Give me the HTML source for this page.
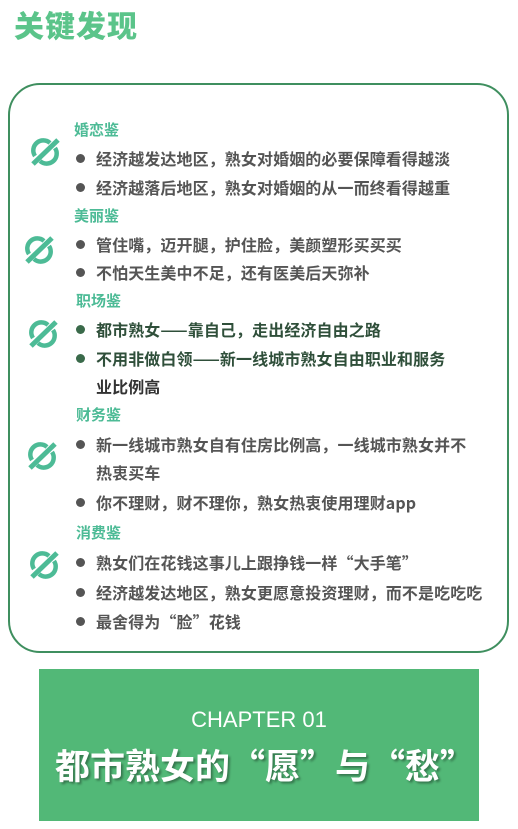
<!DOCTYPE html>
<html><head><meta charset="utf-8"><style>
*{margin:0;padding:0;box-sizing:border-box}
body{width:518px;height:829px;background:#fff;position:relative;overflow:hidden;font-family:"Noto Sans CJK SC","Liberation Sans",sans-serif}
.t{position:absolute;left:14px;top:2px;font-size:30px;font-weight:900;color:#5bc48a;letter-spacing:1px}
.box{position:absolute;left:8px;top:83px;width:501px;height:570px;border:2px solid #3f8f5f;border-radius:32px}
.h{position:absolute;left:74px;font-size:15px;font-weight:bold;color:#4dbb96;line-height:20px}
.l{position:absolute;left:96px;font-size:16px;font-weight:bold;color:#555;line-height:20px;white-space:nowrap;letter-spacing:0.1px}
.l:before{content:"";position:absolute;left:-20px;top:6px;width:9px;height:9px;border-radius:50%;background:#555}
.l.nb:before{display:none}
.g{color:#2f4f3a}.g:before{background:#3a6a4a}
.ic{position:absolute;left:28px;width:34px;height:32px}
.ch{position:absolute;left:39px;top:669px;width:440px;height:152px;background:#52b877;color:#fff;text-align:center}
</style></head><body>
<div class="t">关键发现</div>
<div class="box"></div>
<svg width="0" height="0" style="position:absolute"><defs><g id="i" fill="none" stroke="#4dbb96" stroke-width="4.5"><path d="M7 20 A10 10 0 0 1 22 7"/><path d="M27 12 A10 10 0 0 1 12 25"/><path d="M5 28 L30 4" stroke-width="5"/></g></defs></svg>
<div class="h" style="top:120px">婚恋鉴</div>
<svg class="ic" style="top:136px" viewBox="0 0 34 32"><use href="#i"/></svg>
<div class="l" style="top:148px">经济越发达地区，熟女对婚姻的必要保障看得越淡</div>
<div class="l" style="top:177px">经济越落后地区，熟女对婚姻的从一而终看得越重</div>
<div class="h" style="top:206px">美丽鉴</div>
<svg class="ic" style="top:234px;left:22px" viewBox="0 0 34 32"><use href="#i"/></svg>
<div class="l" style="top:234px">管住嘴，迈开腿，护住脸，美颜塑形买买买</div>
<div class="l" style="top:262px">不怕天生美中不足，还有医美后天弥补</div>
<div class="h" style="top:291px;left:76px">职场鉴</div>
<svg class="ic" style="top:318px;left:26px" viewBox="0 0 34 32"><use href="#i"/></svg>
<div class="l g" style="top:319px">都市熟女——靠自己，走出经济自由之路</div>
<div class="l g" style="top:348px">不用非做白领——新一线城市熟女自由职业和服务</div>
<div class="l g nb" style="top:376px;color:#333">业比例高</div>
<div class="h" style="top:405px;left:76px">财务鉴</div>
<svg class="ic" style="top:440px;left:25px" viewBox="0 0 34 32"><use href="#i"/></svg>
<div class="l" style="top:434px">新一线城市熟女自有住房比例高，一线城市熟女并不</div>
<div class="l nb" style="top:462px">热衷买车</div>
<div class="l" style="top:492px">你不理财，财不理你，熟女热衷使用理财app</div>
<div class="h" style="top:523px;left:76px">消费鉴</div>
<svg class="ic" style="top:549px;left:27px" viewBox="0 0 34 32"><use href="#i"/></svg>
<div class="l" style="top:552px">熟女们在花钱这事儿上跟挣钱一样“大手笔”</div>
<div class="l" style="top:582px">经济越发达地区，熟女更愿意投资理财，而不是吃吃吃</div>
<div class="l" style="top:611px">最舍得为“脸”花钱</div>
<div class="ch">
<div style="position:absolute;top:38px;width:100%;font-family:'Liberation Sans',sans-serif;font-size:22px;font-weight:300">CHAPTER 01</div>
<div style="position:absolute;top:72px;left:16px;width:100%;text-align:left;font-size:35px;font-weight:bold;line-height:48px;white-space:nowrap;text-shadow:2px 2px 2px rgba(0,0,0,.35)">都市熟女的“愿”与“愁”</div>
</div>
</body></html>
